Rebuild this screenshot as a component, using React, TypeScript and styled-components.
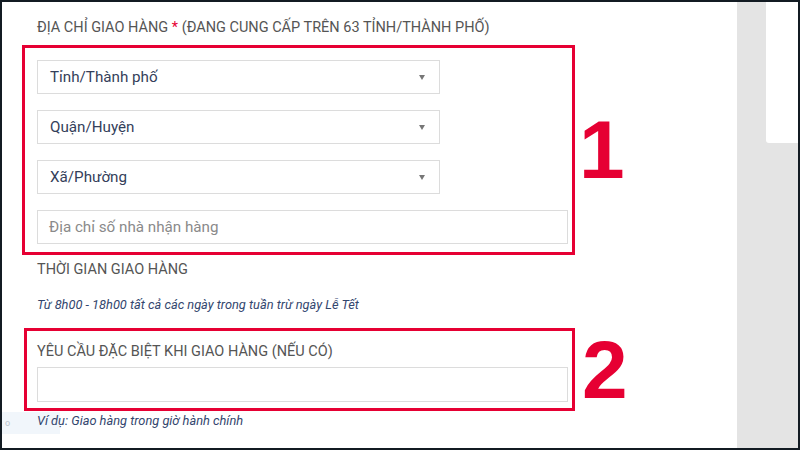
import React from 'react';
import styled, { createGlobalStyle } from 'styled-components';

const GlobalStyle = createGlobalStyle`
  html, body {
    margin: 0;
    padding: 0;
    background: #131b23;
  }
  * {
    box-sizing: border-box;
  }
`;

const colors = {
  frame: '#131b23',
  label: '#555555',
  value: '#34405a',
  placeholder: '#8a8a8a',
  hint: '#33466e',
  border: '#dcdcdc',
  red: '#e60033',
  side: '#e4e4e4',
};

const Frame = styled.div`
  width: 800px;
  height: 450px;
  padding: 2px;
  background: ${colors.frame};
  display: flex;
  overflow: hidden;
  font-family: Roboto, 'Liberation Sans', sans-serif;
`;

const Main = styled.main`
  position: relative;
  flex: 1;
  background: #ffffff;
  padding: 16px 0 0 20px;
  display: flex;
  flex-direction: column;
`;

const SideColumn = styled.aside`
  width: 61px;
  background: ${colors.side};
  display: flex;
  justify-content: flex-end;
  align-items: flex-start;
`;

const SideCard = styled.div`
  width: 32px;
  height: 141px;
  background: #ffffff;
  border-bottom-left-radius: 3px;
`;

const SectionLabel = styled.div<{ $top?: number }>`
  position: relative;
  margin: ${({ $top = 0 }) => $top}px 0 0 15px;
  font-size: 14.5px;
  line-height: 20px;
  color: ${colors.label};
`;

const Required = styled.span`
  color: ${colors.red};
`;

const Annotated = styled.div<{ $top: number; $left: number }>`
  display: flex;
  align-items: center;
  margin-top: ${({ $top }) => $top}px;
  margin-left: ${({ $left }) => $left}px;
`;

const RedBox = styled.div<{ $pad: string; $gap: number; $width: number }>`
  width: ${({ $width }) => $width}px;
  border: 3px solid ${colors.red};
  padding: ${({ $pad }) => $pad};
  display: flex;
  flex-direction: column;
  gap: ${({ $gap }) => $gap}px;
`;

const Marker = styled.div<{ $shift: number }>`
  margin-left: ${({ $shift }) => $shift}px;
  font-family: 'Liberation Sans', Arial, sans-serif;
  font-weight: 700;
  font-size: 82px;
  line-height: 1;
  color: ${colors.red};
`;

const Select = styled.div`
  width: 403px;
  height: 34px;
  border: 1.5px solid ${colors.border};
  padding: 0 12px 0 12px;
  display: flex;
  align-items: center;
  justify-content: space-between;
  font-size: 15.2px;
  color: ${colors.value};
`;

const Caret = styled.span`
  width: 0;
  height: 0;
  border-left: 3.5px solid transparent;
  border-right: 3.5px solid transparent;
  border-top: 5px solid #777777;
  margin-right: 2px;
`;

const TextField = styled.div<{ $height: number }>`
  width: 531px;
  height: ${({ $height }) => $height}px;
  border: 1.5px solid ${colors.border};
  padding: 0 11px;
  display: flex;
  align-items: center;
  font-size: 15.2px;
  color: ${colors.placeholder};
`;

const BoxLabel = styled.div`
  font-size: 14.5px;
  line-height: 20px;
  color: ${colors.label};
`;

const Hint = styled.div<{ $top: number }>`
  position: relative;
  margin: ${({ $top }) => $top}px 0 0 15px;
  font-size: 12.8px;
  line-height: 16px;
  font-style: italic;
  color: ${colors.hint};
`;

const Tray = styled.div`
  position: absolute;
  left: 0;
  top: 410px;
  width: 58px;
  height: 22px;
  background: #f1f6fb;
  padding-left: 3px;
  font-size: 9px;
  line-height: 22px;
  color: #b8c2cc;
`;

const selects = ['Tỉnh/Thành phố', 'Quận/Huyện', 'Xã/Phường'];

export default function App() {
  return (
    <>
      <GlobalStyle />
      <Frame>
        <Main>
          <Tray>o</Tray>
          <SectionLabel>
            ĐỊA CHỈ GIAO HÀNG <Required>*</Required> (ĐANG CUNG CẤP TRÊN 63 TỈNH/THÀNH PHỐ)
          </SectionLabel>
          <Annotated $top={7} $left={0}>
            <RedBox $pad="12px 4px 8px 12px" $gap={16} $width={553}>
              {selects.map((s) => (
                <Select key={s}>
                  {s}
                  <Caret />
                </Select>
              ))}
              <TextField $height={34}>Địa chỉ số nhà nhận hàng</TextField>
            </RedBox>
            <Marker $shift={4}>1</Marker>
          </Annotated>
          <SectionLabel $top={5}>THỜI GIAN GIAO HÀNG</SectionLabel>
          <Hint $top={17}>Từ 8h00 - 18h00 tất cả các ngày trong tuần trừ ngày Lễ Tết</Hint>
          <Annotated $top={15} $left={2}>
            <RedBox $pad="11px 4px 6px 10px" $gap={5} $width={551}>
              <BoxLabel>YÊU CẦU ĐẶC BIỆT KHI GIAO HÀNG (NẾU CÓ)</BoxLabel>
              <TextField $height={35} />
            </RedBox>
            <Marker $shift={7}>2</Marker>
          </Annotated>
          <Hint $top={2}>Ví dụ: Giao hàng trong giờ hành chính</Hint>
        </Main>
        <SideColumn>
          <SideCard />
        </SideColumn>
      </Frame>
    </>
  );
}
